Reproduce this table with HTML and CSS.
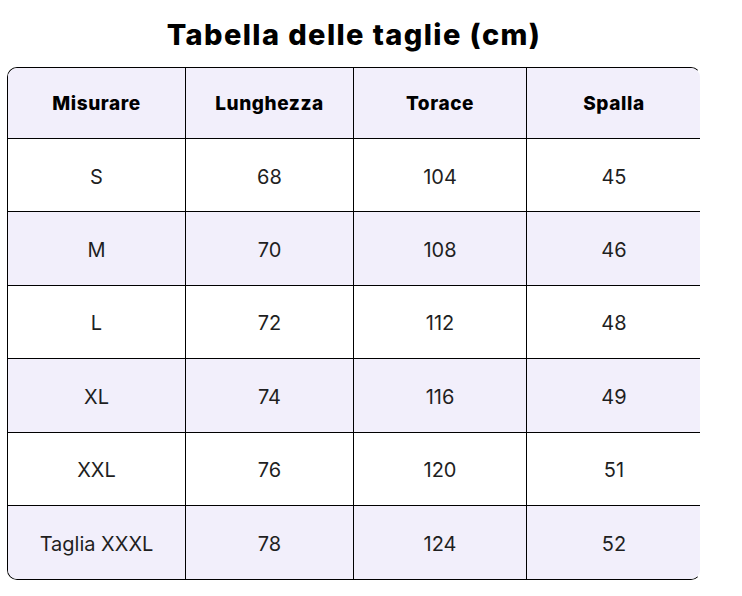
FILE: index.html
```html
<!DOCTYPE html>
<html lang="it">
<head>
<meta charset="utf-8">
<title>Tabella delle taglie</title>
<link rel="stylesheet" href="styles.css">
</head>
<body>
<div class="page">
  <h1 class="title">Tabella delle taglie (cm)</h1>
  <div class="size-table">
    <div class="cell head">Misurare</div>
    <div class="cell head">Lunghezza</div>
    <div class="cell head">Torace</div>
    <div class="cell head last-col">Spalla</div>

    <div class="cell">S</div>
    <div class="cell">68</div>
    <div class="cell">104</div>
    <div class="cell last-col">45</div>

    <div class="cell alt">M</div>
    <div class="cell alt">70</div>
    <div class="cell alt">108</div>
    <div class="cell alt last-col">46</div>

    <div class="cell">L</div>
    <div class="cell">72</div>
    <div class="cell">112</div>
    <div class="cell last-col">48</div>

    <div class="cell alt">XL</div>
    <div class="cell alt">74</div>
    <div class="cell alt">116</div>
    <div class="cell alt last-col">49</div>

    <div class="cell">XXL</div>
    <div class="cell">76</div>
    <div class="cell">120</div>
    <div class="cell last-col">51</div>

    <div class="cell alt last-row">Taglia XXXL</div>
    <div class="cell alt last-row">78</div>
    <div class="cell alt last-row">124</div>
    <div class="cell alt last-row last-col">52</div>
  </div>
</div>
</body>
</html>
```
FILE: styles.css
```css
* { box-sizing: border-box; }
html, body { margin: 0; padding: 0; background: #ffffff; }
body {
  font-family: "Inter", "Open Sans", sans-serif;
  color: #1a1a1a;
}
.page {
  width: 694px;
  margin-left: 7px;
  padding-top: 16px;
}
.title {
  margin: 0 0 16px 0;
  height: 35px;
  line-height: 37px;
  text-align: center;
  font-size: 29px;
  font-weight: 800;
  letter-spacing: 1.4px;
  color: #000;
}
.size-table {
  display: grid;
  grid-template-columns: 178px 168px 173px 174px;
  grid-template-rows: 71px repeat(6, 73.4px);
  border: 1px solid #000;
  border-right-color: transparent;
  border-radius: 10px;
  overflow: hidden;
}
.cell {
  display: flex;
  align-items: center;
  justify-content: center;
  padding-top: 3px;
  border-right: 1px solid #000;
  border-bottom: 1px solid #000;
  font-size: 20px;
  font-weight: 400;
  color: #1f1f1f;
  background: #ffffff;
}
.cell.head {
  padding-top: 0;
  background: #f2effb;
  font-weight: 800;
  font-size: 19px;
  letter-spacing: 0.6px;
  color: #000;
}
.cell.alt { background: #f2effb; }
.cell.last-col { border-right: none; }
.cell.last-row { border-bottom: none; }
```
